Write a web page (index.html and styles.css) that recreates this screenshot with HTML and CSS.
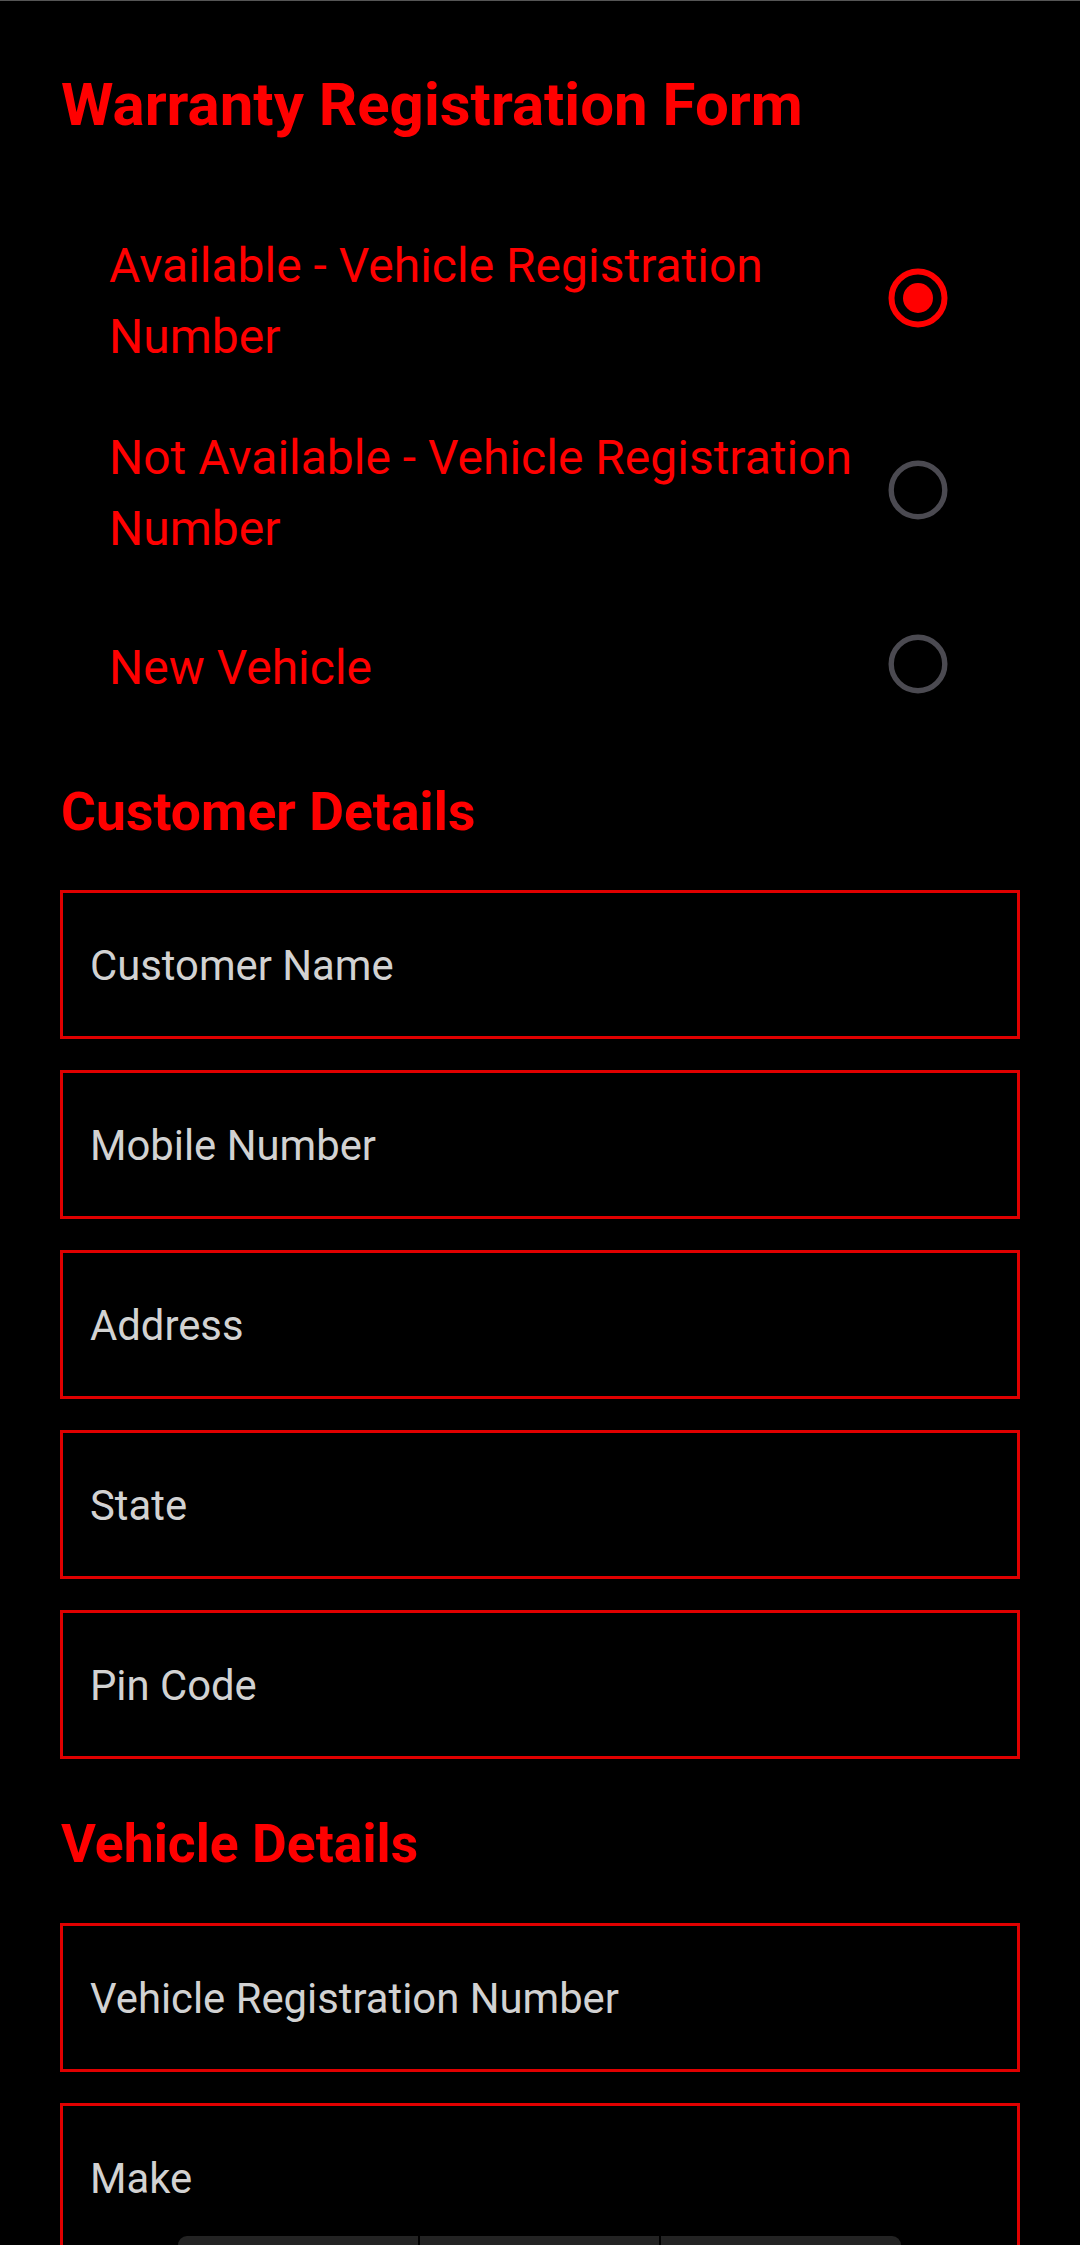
FILE: index.html
```html
<!DOCTYPE html>
<html lang="en">
<head>
<meta charset="utf-8">
<title>Warranty Registration Form</title>
<link rel="stylesheet" href="styles.css">
</head>
<body>
<div class="topline"></div>
<main class="page">
  <h1 class="title">Warranty Registration Form</h1>

  <div class="radio-group">
    <label class="radio-row">
      <span class="radio-text">Available - Vehicle Registration Number</span>
      <svg class="radio" width="60" height="60" viewBox="0 0 60 60" aria-hidden="true">
        <circle cx="30" cy="30" r="26.5" fill="none" stroke="#ff0000" stroke-width="6"/>
        <circle cx="30" cy="30" r="15" fill="#ff0000"/>
      </svg>
    </label>
    <label class="radio-row">
      <span class="radio-text">Not Available - Vehicle Registration Number</span>
      <svg class="radio" width="60" height="60" viewBox="0 0 60 60" aria-hidden="true">
        <circle cx="30" cy="30" r="26.8" fill="none" stroke="#4b4a51" stroke-width="5.4"/>
      </svg>
    </label>
    <label class="radio-row">
      <span class="radio-text">New Vehicle</span>
      <svg class="radio" width="60" height="60" viewBox="0 0 60 60" aria-hidden="true">
        <circle cx="30" cy="30" r="26.8" fill="none" stroke="#4b4a51" stroke-width="5.4"/>
      </svg>
    </label>
  </div>

  <h2 class="section section-customer">Customer Details</h2>
  <div class="fields">
    <div class="field">Customer Name</div>
    <div class="field">Mobile Number</div>
    <div class="field">Address</div>
    <div class="field">State</div>
    <div class="field">Pin Code</div>
  </div>

  <h2 class="section section-vehicle">Vehicle Details</h2>
  <div class="fields">
    <div class="field">Vehicle Registration Number</div>
    <div class="field">Make</div>
  </div>
</main>

<div class="bottom-bar">
  <div class="seg seg-first"></div>
  <div class="seg"></div>
  <div class="seg seg-last"></div>
</div>
</body>
</html>
```

FILE: styles.css
```css
html, body {
  margin: 0;
  padding: 0;
  background: #000;
  height: 2245px;
  overflow: hidden;
}

body {
  font-family: Roboto, "Noto Sans", sans-serif;
  color: #ff0000;
}

.topline {
  height: 1px;
  background: #555555;
}

.page {
  padding: 0 60px;
}

.title {
  margin: 67.5px 0 0 0;
  font-size: 60px;
  line-height: 72px;
  font-weight: 700;
  color: #ff0000;
  padding-left: 1px;
}

.radio-group {
  margin-top: 61.5px;
  display: flex;
  flex-direction: column;
}

.radio-row {
  display: flex;
  align-items: center;
  box-sizing: border-box;
  min-height: 156px;
  padding: 22px 72px 22px 49px;
  gap: 18px;
}

.radio-text {
  flex: 1;
  font-size: 48px;
  line-height: 71px;
  padding-top: 6px;
  color: #ff0000;
}

.radio {
  flex: none;
  display: block;
}

.section {
  margin: 0;
  font-size: 53.5px;
  line-height: 62px;
  font-weight: 700;
  color: #ff0000;
  padding-left: 1px;
}

.section-customer {
  margin-top: 38.7px;
  margin-bottom: 47.8px;
}

.section-vehicle {
  margin-top: 53.9px;
  margin-bottom: 47.6px;
}

.fields {
  display: flex;
  flex-direction: column;
  gap: 31px;
}

.field {
  box-sizing: border-box;
  height: 149px;
  border: 3px solid #e00000;
  display: flex;
  align-items: center;
  padding: 2px 0 0 27px;
  font-size: 41.8px;
  color: #d2d2d2;
}

.bottom-bar {
  position: fixed;
  left: 178px;
  width: 723px;
  bottom: 0;
  height: 9px;
  display: flex;
  gap: 2px;
}

.seg {
  flex: 1;
  background: #232323;
}

.seg-first {
  border-top-left-radius: 9px;
}

.seg-last {
  border-top-right-radius: 9px;
}
```
